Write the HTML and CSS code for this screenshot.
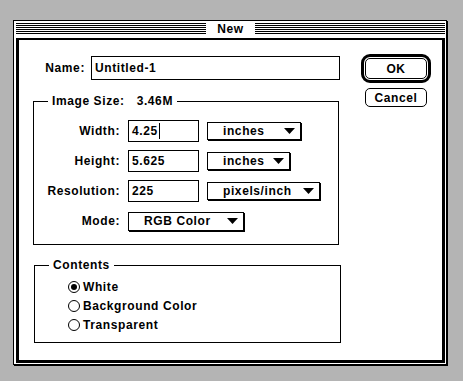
FILE: index.html
```html
<!DOCTYPE html>
<html>
<head>
<meta charset="utf-8">
<title>New</title>
<link rel="stylesheet" href="styles.css">
</head>
<body>
<div class="window">
  <div class="titlebar"><span class="title">New</span></div>
  <div class="frame">
    <div class="main">
      <div class="name-row">
        <span class="name-label">Name:</span>
        <div class="field name-field">Untitled-1</div>
      </div>
      <fieldset class="group size-group">
        <legend>Image Size:<span class="size-val">3.46M</span></legend>
        <div class="size-grid">
          <span class="lbl">Width:</span>
          <div class="field num">4.25<span class="caret"></span></div>
          <div class="popup pop-inches1"><span>inches</span><svg class="arrow" width="11" height="6" viewBox="0 0 11 6"><polygon points="0,0 11,0 5.5,6" fill="#000"/></svg></div>

          <span class="lbl">Height:</span>
          <div class="field num">5.625</div>
          <div class="popup pop-inches2"><span>inches</span><svg class="arrow" width="11" height="6" viewBox="0 0 11 6"><polygon points="0,0 11,0 5.5,6" fill="#000"/></svg></div>

          <span class="lbl">Resolution:</span>
          <div class="field num">225</div>
          <div class="popup pop-res"><span>pixels/inch</span><svg class="arrow" width="11" height="6" viewBox="0 0 11 6"><polygon points="0,0 11,0 5.5,6" fill="#000"/></svg></div>

          <span class="lbl">Mode:</span>
          <div class="popup pop-mode"><span>RGB Color</span><svg class="arrow" width="11" height="6" viewBox="0 0 11 6"><polygon points="0,0 11,0 5.5,6" fill="#000"/></svg></div>
        </div>
      </fieldset>
      <fieldset class="group contents-group">
        <legend>Contents</legend>
        <div class="radios">
          <div class="radio-row"><span class="radio on"></span><span>White</span></div>
          <div class="radio-row"><span class="radio"></span><span>Background Color</span></div>
          <div class="radio-row"><span class="radio"></span><span>Transparent</span></div>
        </div>
      </fieldset>
    </div>
    <div class="buttons">
      <div class="default-ring"><div class="btn btn-ok">OK</div></div>
      <div class="btn btn-cancel">Cancel</div>
    </div>
  </div>
</div>
</body>
</html>
```

FILE: styles.css
```css
* { box-sizing: border-box; }

html, body {
  margin: 0;
  padding: 0;
}

body {
  background: #b4b4b4;
  width: 463px;
  height: 381px;
  padding: 20px 0 0 13px;
  font-family: "Liberation Sans", Arial, sans-serif;
  font-weight: bold;
  font-size: 12px;
  letter-spacing: 0.6px;
  color: #000;
}

.window {
  width: 434px;
  height: 345px;
  background: #fff;
  border: 1px solid #000;
  box-shadow: 1px 1px 0 #000;
  padding: 0 1px 1px 2px;
  display: flex;
  flex-direction: column;
}

.titlebar {
  height: 17px;
  display: flex;
  justify-content: center;
  align-items: center;
  background-image: repeating-linear-gradient(to bottom, #000 0 1px, #fff 1px 2px);
  background-size: 100% 11px;
  background-position: 0 2px;
  background-repeat: no-repeat;
}

.title {
  background: #fff;
  padding: 0 11px;
  line-height: 17px;
  height: 17px;
}

.frame {
  flex: 1;
  border-style: solid;
  border-color: #000;
  border-width: 2px 3px 3px 3px;
  display: flex;
}

.main {
  padding: 16px 0 0 14px;
  width: 322px;
  display: flex;
  flex-direction: column;
}

.name-row {
  display: grid;
  grid-template-columns: 52px 249px;
  column-gap: 6px;
  align-items: center;
}

.name-label { text-align: right; }

.field {
  border: 1px solid #000;
  background: #fff;
  display: flex;
  align-items: center;
  padding-left: 3px;
}

.name-field { height: 24px; }

.group {
  margin: 0;
  padding: 0;
  border: 1px solid #000;
  min-inline-size: 0;
}

.group legend {
  margin-left: 14px;
  padding: 0 4px 0 4px;
  line-height: 14px;
}

.size-val { margin-left: 12px; }

.size-group {
  width: 306px;
  margin-top: 14px;
}

.size-grid {
  display: grid;
  grid-template-columns: 86px 71px auto;
  grid-auto-rows: 22px;
  column-gap: 8px;
  row-gap: 8px;
  align-items: center;
  padding: 12px 0 12px 0;
}

.lbl { text-align: right; }

.num { height: 22px; }

.caret {
  display: inline-block;
  width: 1px;
  height: 16px;
  background: #000;
  margin-left: 1px;
}

.popup {
  height: 18px;
  border: 1px solid #000;
  box-shadow: 1px 1px 0 #000;
  background: #fff;
  display: flex;
  align-items: center;
  justify-content: space-between;
  padding: 0 5px 0 15px;
  justify-self: start;
}

.arrow { display: block; flex: none; }

.pop-inches1 { width: 94px; }
.pop-inches2 { width: 83px; }
.pop-res { width: 113px; }
.pop-mode {
  width: 116px;
  height: 19px;
  grid-column: 2 / span 2;
}

.contents-group {
  width: 307px;
  margin-top: 13px;
  margin-left: 1px;
}

.radios {
  padding: 5px 0 8px 33px;
}

.radio-row {
  height: 19px;
  display: flex;
  align-items: center;
  gap: 3px;
}

.radio {
  width: 12px;
  height: 12px;
  border: 1px solid #000;
  border-radius: 50%;
  display: flex;
  align-items: center;
  justify-content: center;
  flex: none;
}

.radio.on::after {
  content: "";
  width: 6px;
  height: 6px;
  border-radius: 50%;
  background: #000;
}

.buttons {
  margin-left: 20px;
  padding-top: 14px;
  display: flex;
  flex-direction: column;
  align-items: flex-start;
}

.default-ring {
  border: 3px solid #000;
  border-radius: 9px;
  padding: 1px;
}

.btn {
  width: 62px;
  border: 1px solid #000;
  background: #fff;
  display: flex;
  align-items: center;
  justify-content: center;
}

.btn-ok {
  height: 21px;
  border-radius: 5px;
}

.btn-cancel {
  height: 19px;
  border-radius: 5px;
  margin-top: 5px;
  margin-left: 4px;
}
```
